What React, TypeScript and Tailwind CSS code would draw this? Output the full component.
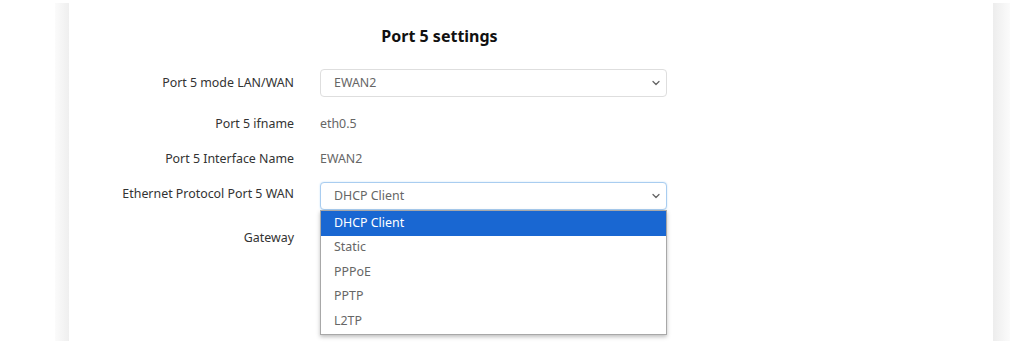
import React from "react";

function Chevron() {
  return (
    <svg width="10" height="10" viewBox="0 0 10 10" className="text-[#666]">
      <path d="M2 3.5 L5 6.5 L8 3.5" fill="none" stroke="currentColor" strokeWidth="1.3" strokeLinecap="round" strokeLinejoin="round" />
    </svg>
  );
}

const options = ["DHCP Client", "Static", "PPPoE", "PPTP", "L2TP"];

function Label({ children, className = "" }: { children: React.ReactNode; className?: string }) {
  return (
    <div className={"w-[200px] shrink-0 whitespace-nowrap text-right text-[12.4px] text-[#333] " + className}>{children}</div>
  );
}

export default function App() {
  return (
    <div className="w-[1024px] h-[360px] bg-white overflow-hidden" style={{ fontFamily: '"Noto Sans", "Open Sans", sans-serif' }}>
      <div className="flex ml-[55px] mt-[3px] w-[955px] h-[338px]">
        <div className="w-[14px] bg-gradient-to-r from-[#fbfbfb] to-[#efefef]" />
        <div className="flex-1 bg-white">
          <div className="ml-[25px] w-[573px]">
            <div className="pl-[118px] pt-[22px] text-center text-[16px] leading-[22px] font-bold text-[#111]">
              Port 5 settings
            </div>
            <div className="mt-[22px] flex items-center h-[28px]">
              <Label>Port 5 mode LAN/WAN</Label>
              <div className="ml-[26px] w-[347px] h-[28px] border border-[#dedede] rounded-[4px] flex items-center justify-between pl-[13px] pr-[5px] text-[12.4px] text-[#666]">
                <span>EWAN2</span>
                <Chevron />
              </div>
            </div>
            <div className="mt-[13px] flex items-center h-[28px]">
              <Label>Port 5 ifname</Label>
              <div className="ml-[26px] text-[12.4px] text-[#666]">eth0.5</div>
            </div>
            <div className="mt-[7px] flex items-center h-[28px]">
              <Label>Port 5 Interface Name</Label>
              <div className="ml-[26px] text-[12.4px] text-[#666]">EWAN2</div>
            </div>
            <div className="mt-[9px] flex items-center h-[28px]">
              <Label className="-mt-[3px]">Ethernet Protocol Port 5 WAN</Label>
              <div className="ml-[26px] w-[347px] h-[28px] relative">
                <div className="h-[28px] border border-[#a9cdf0] shadow-[0_0_2px_#c6e0f8] rounded-[4px] flex items-center justify-between pl-[13px] pr-[5px] text-[12.4px] text-[#666] bg-white">
                  <span>DHCP Client</span>
                  <Chevron />
                </div>
                <div className="absolute left-0 top-[28px] w-[347px] bg-white border border-[#a8a8a8] shadow-[0_2px_4px_rgba(0,0,0,0.25)] z-10">
                  {options.map((o, i) => (
                    <div
                      key={o}
                      className={
                        i === 0
                          ? "h-[24.5px] flex items-center pl-[13px] text-[12.4px] bg-[#1967d2] text-white"
                          : "h-[24.5px] flex items-center pl-[13px] text-[12.4px] text-[#666]"
                      }
                    >
                      {o}
                    </div>
                  ))}
                </div>
              </div>
            </div>
            <div className="mt-[14px] flex items-center h-[28px]">
              <Label>Gateway</Label>
            </div>
          </div>
        </div>
        <div className="w-[17px] bg-gradient-to-r from-[#ededed] to-[#fbfbfb]" />
      </div>
    </div>
  );
}
